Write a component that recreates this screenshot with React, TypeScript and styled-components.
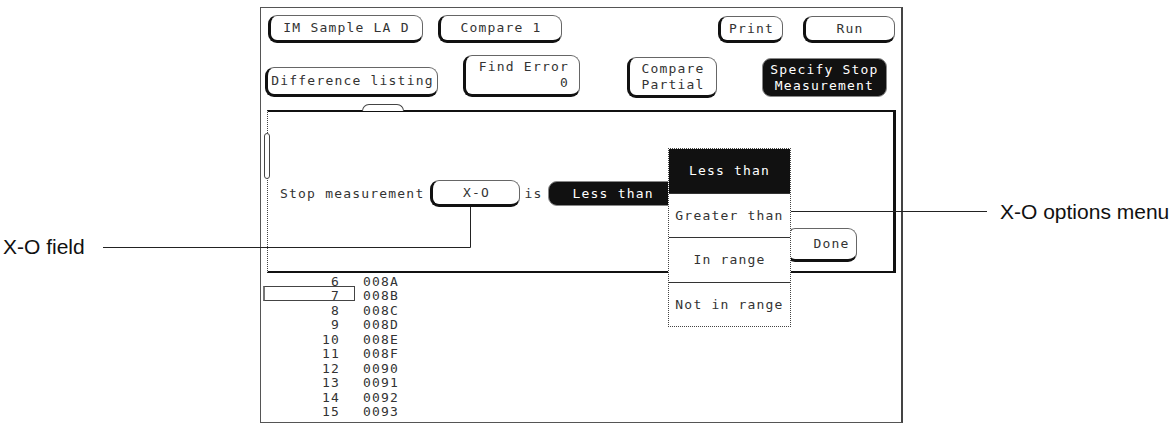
import * as React from 'react'
import styled, { createGlobalStyle, css } from 'styled-components'

const GlobalStyle = createGlobalStyle`
  html, body {
    margin: 0;
    padding: 0;
    background: #fff;
  }
  body {
    width: 1173px;
    height: 425px;
    overflow: hidden;
  }
`

const Figure = styled.div`
  position: relative;
  display: flex;
  width: 1173px;
  height: 425px;
  background: #fff;
  font-family: 'Liberation Sans', Arial, sans-serif;
`

const CalloutSide = styled.div<{ $width: number; $top: number; $padLeft: number }>`
  box-sizing: border-box;
  flex: none;
  width: ${p => p.$width}px;
  padding-top: ${p => p.$top}px;
  padding-left: ${p => p.$padLeft}px;
`

const CalloutLabel = styled.span`
  display: inline-block;
  font-size: 21px;
  line-height: 24px;
  color: #111;
  white-space: nowrap;
`

const Screen = styled.div`
  box-sizing: border-box;
  flex: none;
  width: 643px;
  height: 416px;
  margin-top: 7px;
  border: 1px solid #555;
  border-right: 2px solid #444;
  font-family: 'DejaVu Sans Mono', 'Liberation Mono', monospace;
  font-size: 13px;
  letter-spacing: 1.2px;
  color: #333;
`

const KeyRow = styled.div<{ $top: number; $left: number; $height: number }>`
  display: flex;
  align-items: flex-end;
  height: ${p => p.$height}px;
  margin-top: ${p => p.$top}px;
  padding-left: ${p => p.$left}px;
`

const Key = styled.div<{
  $w: number
  $h: number
  $ml?: number
  $mb?: number
  $inverse?: boolean
  $right?: boolean
}>`
  box-sizing: border-box;
  flex: none;
  display: flex;
  flex-direction: column;
  justify-content: center;
  align-items: ${p => (p.$right ? 'flex-end' : 'center')};
  width: ${p => p.$w}px;
  height: ${p => p.$h}px;
  margin-left: ${p => p.$ml ?? 0}px;
  margin-bottom: ${p => p.$mb ?? 0}px;
  padding-right: ${p => (p.$right ? 10 : 0)}px;
  line-height: 16px;
  white-space: pre;
  border: 1px solid #666;
  border-left: 3px solid #111;
  border-bottom: 3px solid #111;
  border-radius: 9px;
  background: #fff;

  ${p => p.$inverse && css`
    background: #111;
    color: #fff;
    border: 1px solid #888;
  `}
`

const Dialog = styled.div`
  position: relative;
  box-sizing: border-box;
  width: 629px;
  height: 163px;
  margin: 12px 0 0 6px;
  border-top: 2px solid #111;
  border-right: 3px solid #111;
  border-bottom: 2px solid #111;
  border-left: 1px dotted #444;
`

const Tab = styled.div`
  position: absolute;
  top: -8px;
  left: 94px;
  width: 40px;
  height: 6px;
  border: 1px solid #444;
  border-bottom: none;
  border-radius: 7px 7px 0 0;
  background: #fff;
`

const Nub = styled.div`
  position: absolute;
  top: 21px;
  left: -4px;
  width: 4px;
  height: 44px;
  border: 1px solid #444;
  border-radius: 3px;
  background: #fff;
`

const PromptRow = styled.div`
  display: flex;
  align-items: center;
  height: 27px;
  margin-top: 68px;
  padding-left: 12px;
`

const Prompt = styled.span<{ $ml?: number }>`
  margin-left: ${p => p.$ml ?? 0}px;
  white-space: pre;
`

const Pill = styled.div`
  box-sizing: border-box;
  flex: none;
  display: flex;
  align-items: center;
  width: 130px;
  height: 25px;
  margin-left: 5px;
  padding-left: 24px;
  background: #111;
  color: #fff;
  border: 1px solid #888;
  border-radius: 9px;
`

const DoneRow = styled.div`
  display: flex;
  justify-content: flex-end;
  margin-top: 21px;
  padding-right: 36px;
`

const Menu = styled.div`
  position: absolute;
  top: 36px;
  left: 400px;
  box-sizing: border-box;
  display: flex;
  flex-direction: column;
  width: 123px;
  height: 179px;
  border: 1px dotted #444;
  background: #fff;
`

const MenuItem = styled.div<{ $active?: boolean }>`
  flex: 1;
  display: flex;
  align-items: center;
  justify-content: center;
  white-space: pre;
  & + & {
    border-top: 1px solid #333;
  }

  ${p => p.$active && css`
    background: #111;
    color: #fff;
  `}
`

const Listing = styled.div`
  margin-top: 2px;
`

const ListRow = styled.div<{ $selected?: boolean }>`
  position: relative;
  display: grid;
  grid-template-columns: 79px 1fr;
  column-gap: 23px;
  height: 14.44px;
  line-height: 14.44px;

  ${p => p.$selected && css`
    &::before {
      content: '';
      position: absolute;
      left: 2px;
      top: -3px;
      width: 92px;
      height: 15px;
      box-sizing: border-box;
      border: 1px solid #444;
      border-left: 2px solid #777;
    }
  `}
`

const LineNo = styled.span`
  text-align: right;
`

const Leaders = styled.svg`
  position: absolute;
  inset: 0;
  pointer-events: none;
`

const ROWS: [number, string][] = [
  [6, '008A'],
  [7, '008B'],
  [8, '008C'],
  [9, '008D'],
  [10, '008E'],
  [11, '008F'],
  [12, '0090'],
  [13, '0091'],
  [14, '0092'],
  [15, '0093'],
]

const OPTIONS = ['Less than', 'Greater than', 'In range', 'Not in range']

export default function App() {
  return (
    <>
      <GlobalStyle />
      <Figure>
        <CalloutSide $width={260} $top={235} $padLeft={3}>
          <CalloutLabel>X-O field</CalloutLabel>
        </CalloutSide>

        <Screen>
          <KeyRow $top={7} $left={7} $height={28}>
            <Key $w={155} $h={28}>IM Sample LA D</Key>
            <Key $w={124} $h={28} $ml={15}>Compare 1</Key>
            <Key $w={65} $h={27} $ml={156}>Print</Key>
            <Key $w={92} $h={27} $ml={20}>Run</Key>
          </KeyRow>

          <KeyRow $top={12} $left={4} $height={43}>
            <Key $w={173} $h={30} $mb={1}>Difference listing</Key>
            <Key $w={117} $h={42} $ml={25} $mb={1} $right>
              <span>Find Error</span>
              <span>0</span>
            </Key>
            <Key $w={90} $h={41} $ml={47}>
              <span>Compare</span>
              <span>Partial</span>
            </Key>
            <Key $w={125} $h={39} $ml={45} $mb={1} $inverse>
              <span>Specify Stop</span>
              <span>Measurement</span>
            </Key>
          </KeyRow>

          <Dialog>
            <Tab />
            <Nub />
            <PromptRow>
              <Prompt>Stop measurement</Prompt>
              <Key $w={90} $h={27} $ml={6}>X-O</Key>
              <Prompt $ml={4}>is</Prompt>
              <Pill>Less than</Pill>
            </PromptRow>
            <DoneRow>
              <Key $w={71} $h={34}>  Done</Key>
            </DoneRow>
            <Menu>
              {OPTIONS.map((o, i) => (
                <MenuItem key={o} $active={i === 0}>{o}</MenuItem>
              ))}
            </Menu>
          </Dialog>

          <Listing>
            {ROWS.map(([n, hex]) => (
              <ListRow key={n} $selected={n === 7}>
                <LineNo>{n}</LineNo>
                <span>{hex}</span>
              </ListRow>
            ))}
          </Listing>
        </Screen>

        <CalloutSide $width={270} $top={200} $padLeft={97}>
          <CalloutLabel>X-O options menu</CalloutLabel>
        </CalloutSide>

        <Leaders width={1173} height={425} viewBox="0 0 1173 425">
          <g stroke="#222" strokeWidth={1} fill="none">
            <path d="M103 247.5 H470.5 V207" />
            <path d="M791 211.5 H987" />
          </g>
        </Leaders>
      </Figure>
    </>
  )
}
